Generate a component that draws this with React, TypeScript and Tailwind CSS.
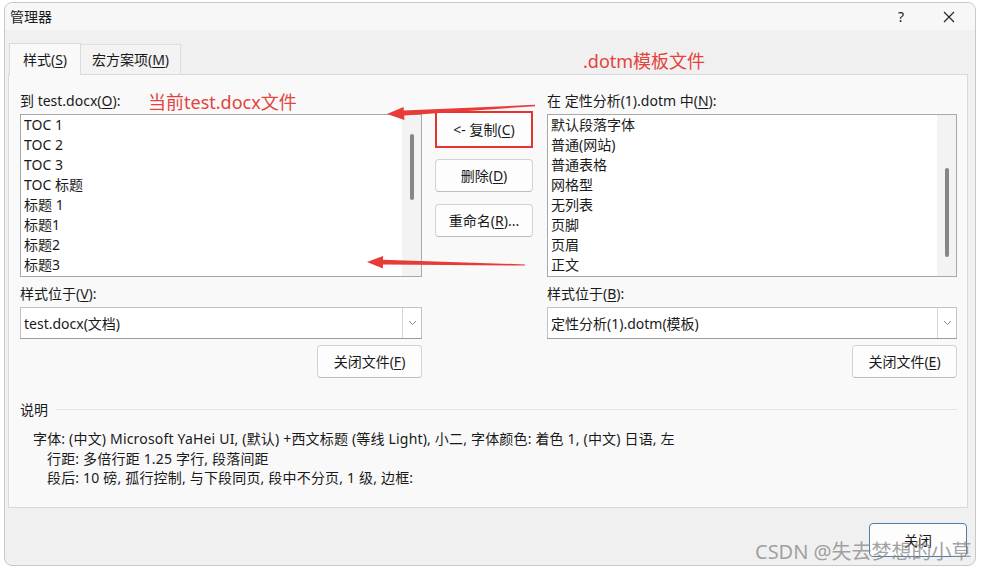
import React from 'react';

const leftItems = ['TOC 1', 'TOC 2', 'TOC 3', 'TOC 标题', '标题 1', '标题1', '标题2', '标题3'];
const rightItems = ['默认段落字体', '普通(网站)', '普通表格', '网格型', '无列表', '页脚', '页眉', '正文'];

function Key({ k }: { k: string }) {
  return <u className="underline-offset-2">{k}</u>;
}

function Btn({ children, className = '' }: { children: React.ReactNode; className?: string }) {
  return (
    <div
      className={`flex items-center justify-center h-[33px] rounded-[4px] border border-[#d3d3d3] border-b-[#bcbcbc] bg-[#fdfdfd] text-[14px] text-[#1a1a1a] ${className}`}
    >
      {children}
    </div>
  );
}

function StyleList({ items, thumbTop, thumbH }: { items: string[]; thumbTop: number; thumbH: number }) {
  return (
    <div className="flex h-[163px] border border-[#a8a8a8] bg-white">
      <div className="flex-1 pl-[3px]">
        {items.map((t) => (
          <div key={t} className="h-[20px] leading-[20px] text-[14px] text-[#1a1a1a]">
            {t}
          </div>
        ))}
      </div>
      <div className="w-[19px] bg-[#f3f3f3] flex justify-center">
        <div className="w-[4px] rounded-full bg-[#868686]" style={{ marginTop: thumbTop, height: thumbH }} />
      </div>
    </div>
  );
}

function Combo({ text }: { text: string }) {
  return (
    <div className="flex h-[32px] border border-[#c2c2c2] border-b-[#9a9a9a] bg-white">
      <div className="flex-1 flex items-center pl-[3px] text-[14px] text-[#1a1a1a]">{text}</div>
      <div className="w-[19px] border-l border-[#d6d6d6] flex items-center justify-center">
        <svg width="9" height="6" viewBox="0 0 9 6">
          <polyline points="1,1 4.5,4.5 8,1" fill="none" stroke="#8a8a8a" strokeWidth="1" />
        </svg>
      </div>
    </div>
  );
}

export default function App() {
  return (
    <div className="relative w-[982px] h-[572px] bg-white overflow-hidden font-['Noto_Sans','Noto_Sans_CJK_SC',sans-serif] text-[#1a1a1a]">
      <div className="ml-[4px] mt-[2px] w-[972px] h-[564px] border border-[#c8c8c8] rounded-[8px] bg-[#f0f0f0] flex flex-col overflow-hidden">
        {/* title bar */}
        <div className="h-[27px] bg-[#f7f7f7] flex items-center pl-[5px] pr-[20px] text-[14px]">
          <span>管理器</span>
          <span className="ml-auto mr-[39px] text-[14px]">?</span>
          <svg width="12" height="12" viewBox="0 0 12 12">
            <path d="M1 1 L11 11 M11 1 L1 11" stroke="#222" strokeWidth="1.1" />
          </svg>
        </div>

        {/* tabs */}
        <div className="flex items-end h-[44px] pl-[4px]">
          <div className="w-[72px] h-[32px] flex items-center justify-center border border-b-0 border-[#dadada] bg-[#f9f9f9] text-[14px] -mb-px relative z-10">
            样式(<Key k="S" />)
          </div>
          <div className="w-[100px] h-[30px] flex items-center justify-center border border-l-0 border-b-0 border-[#dedede] bg-[#f3f3f3] text-[14px]">
            宏方案项(<Key k="M" />)
          </div>
        </div>

        {/* panel */}
        <div className="ml-[3px] w-[960px] h-[434px] border border-[#dadada] bg-[#f9f9f9] pl-[11px] pr-[10px] pt-[15px]">
          <div className="flex">
            <div className="w-[402px]">
              <div className="h-[20px] flex items-center text-[14px]">
                到 test.docx(<Key k="O" />):
              </div>
              <div className="mt-[4px]">
                <StyleList items={leftItems} thumbTop={19} thumbH={66} />
              </div>
              <div className="mt-[6px] h-[20px] flex items-center text-[14px]">
                样式位于(<Key k="V" />):
              </div>
              <div className="mt-[4px]">
                <Combo text="test.docx(文档)" />
              </div>
              <div className="mt-[6px] flex justify-end">
                <Btn className="w-[105px]">
                  关闭文件(<Key k="F" />)
                </Btn>
              </div>
            </div>

            <div className="w-[125px] pl-[13px] pt-[21px]">
              <div className="w-[98px] h-[37px] border-2 border-[#e8322f] bg-[#fdfdfd] flex items-center justify-center text-[14px]">
                &lt;- 复制(<Key k="C" />)
              </div>
              <Btn className="mt-[11px] w-[98px]">
                删除(<Key k="D" />)
              </Btn>
              <Btn className="mt-[12px] w-[98px]">
                重命名(<Key k="R" />)...
              </Btn>
            </div>

            <div className="w-[410px]">
              <div className="h-[20px] flex items-center text-[14px]">
                在 定性分析(1).dotm 中(<Key k="N" />):
              </div>
              <div className="mt-[4px]">
                <StyleList items={rightItems} thumbTop={53} thumbH={89} />
              </div>
              <div className="mt-[6px] h-[20px] flex items-center text-[14px]">
                样式位于(<Key k="B" />):
              </div>
              <div className="mt-[4px]">
                <Combo text="定性分析(1).dotm(模板)" />
              </div>
              <div className="mt-[6px] flex justify-end">
                <Btn className="w-[105px]">
                  关闭文件(<Key k="E" />)
                </Btn>
              </div>
            </div>
          </div>

          {/* description */}
          <div className="mt-[21px] h-[20px] flex items-center gap-[8px] text-[14px]">
            <span>说明</span>
            <div className="flex-1 h-px bg-[#e2e2e2]" />
          </div>
          <div className="mt-[10px] pl-[13px] text-[14px] leading-[19.5px] tracking-[0.18px]">
            <div>字体: (中文) Microsoft YaHei UI, (默认) +西文标题 (等线 Light), 小二, 字体颜色: 着色 1, (中文) 日语, 左</div>
            <div className="pl-[14px]">行距: 多倍行距 1.25 字行, 段落间距</div>
            <div className="pl-[14px]">段后: 10 磅, 孤行控制, 与下段同页, 段中不分页, 1 级, 边框:</div>
          </div>
        </div>

        {/* footer */}
        <div className="mt-[15px] flex justify-end pr-[8px]">
          <div className="w-[98px] h-[34px] rounded-[4px] border border-[#4f7dab] bg-[#fdfdfd] flex items-center justify-center text-[14px]">
            关闭
          </div>
        </div>
      </div>

      {/* annotations overlay */}
      <div className="absolute left-[148px] top-[90px] text-[18px] leading-[24px] text-[#e5423b]">当前test.docx文件</div>
      <div className="absolute left-[583px] top-[49px] text-[18px] leading-[24px] text-[#e5423b]">.dotm模板文件</div>
      <svg className="absolute left-0 top-0 pointer-events-none" width="982" height="572" viewBox="0 0 982 572">
        <polygon
          points="387,114 403.6,107 403.8,110.6 535,104.8 535,106.2 404.2,115.4 404.4,120"
          fill="#e83a36"
        />
        <polygon
          points="367,262 383.1,256 383,259.8 525,264.4 525,265.6 383,264.6 382.9,268.6"
          fill="#e83a36"
        />
      </svg>
      <div className="absolute left-[755px] top-[539px] text-[20px] leading-[26px] text-[#8a8a8a]/80">CSDN @失去梦想的小草</div>
    </div>
  );
}
